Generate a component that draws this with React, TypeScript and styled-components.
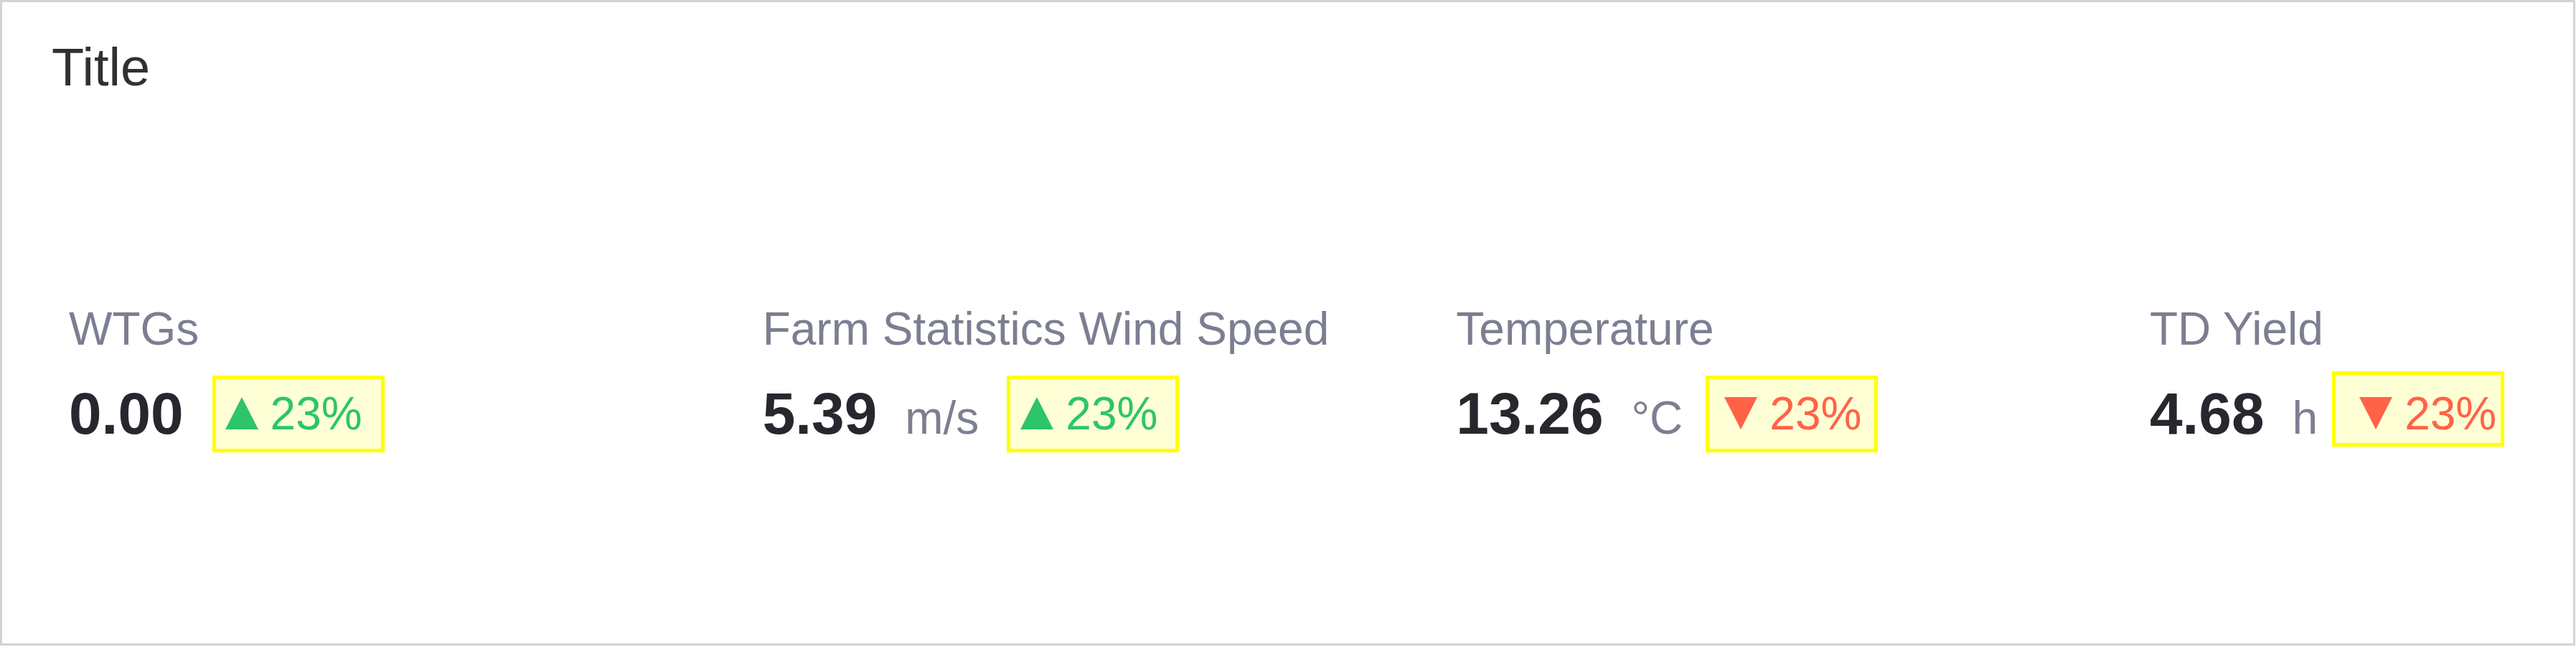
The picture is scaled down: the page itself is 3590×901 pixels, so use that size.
import * as React from "react";
import styled, { createGlobalStyle } from "styled-components";

const GlobalStyle = createGlobalStyle`
  html, body {
    margin: 0;
    padding: 0;
    background: #ffffff;
    overflow: hidden;
  }

  body {
    font-family: "Liberation Sans", Arial, sans-serif;
  }
`;

const Card = styled.section`
  box-sizing: border-box;
  width: 3589px;
  height: 899px;
  padding: 54px 24px 0 69px;
  border: 3px solid #d3d3d3;
  background: #ffffff;
  overflow: hidden;
`;

const Title = styled.h1`
  margin: 0;
  font-size: 74px;
  line-height: 74px;
  font-weight: 400;
  color: #303133;
`;

const StatGrid = styled.div`
  display: grid;
  grid-template-columns: repeat(3, 966.67px) 1fr;
  margin: 295px 0 0 24px;
`;

const Stat = styled.div`
  display: flex;
  flex-direction: column;
  min-width: 0;
`;

const Label = styled.div`
  font-size: 64px;
  line-height: 64px;
  color: #7c7f91;
  white-space: nowrap;
`;

const ValueRow = styled.div`
  display: flex;
  align-items: center;
  margin-top: 45px;
`;

const ValueGroup = styled.div`
  display: flex;
  align-items: baseline;
`;

const Value = styled.span`
  font-size: 82px;
  line-height: 82px;
  font-weight: 700;
  color: #26282e;
`;

const Unit = styled.span`
  margin-left: 39px;
  font-size: 64px;
  line-height: 64px;
  color: #7c7f91;
`;

const Badge = styled.span<{ $up: boolean; $dx: number; $dy: number; $h: number }>`
  position: relative;
  isolation: isolate;
  display: inline-flex;
  align-items: baseline;
  gap: 17px;
  margin-left: 58px;
  font-size: 64px;
  line-height: 64px;
  color: ${(p) => (p.$up ? "#2ec46a" : "#ff6347")};

  &::before {
    content: "";
    position: absolute;
    z-index: -1;
    left: ${(p) => p.$dx}px;
    top: ${(p) => p.$dy}px;
    box-sizing: border-box;
    width: 240px;
    height: ${(p) => p.$h}px;
    border: 5px solid #ffff00;
    background: #ffffd6;
  }
`;

const Arrow = ({ up }: { up: boolean }) => (
  <svg width="46" height="45" viewBox="0 0 46 45" fill="currentColor">
    {up ? <path d="M23 0 L46 45 L0 45 Z" /> : <path d="M0 0 H46 L23 45 Z" />}
  </svg>
);

interface StatItem {
  label: string;
  value: string;
  unit?: string;
  up: boolean;
  dx: number;
  dy: number;
  h: number;
}

const stats: StatItem[] = [
  { label: "WTGs", value: "0.00", up: true, dx: -18, dy: -21, h: 107 },
  { label: "Farm Statistics Wind Speed", value: "5.39", unit: "m/s", up: true, dx: -19, dy: -21, h: 107 },
  { label: "Temperature", value: "13.26", unit: "°C", up: false, dx: -26, dy: -21, h: 107 },
  { label: "TD Yield", value: "4.68", unit: "h", up: false, dx: -38, dy: -27, h: 105 },
];

const App = () => {
  return (
    <>
      <GlobalStyle />
      <Card>
        <Title>Title</Title>
        <StatGrid>
          {stats.map((s) => (
            <Stat key={s.label}>
              <Label>{s.label}</Label>
              <ValueRow>
                <ValueGroup>
                  <Value>{s.value}</Value>
                  {s.unit && <Unit>{s.unit}</Unit>}
                </ValueGroup>
                <Badge $up={s.up} $dx={s.dx} $dy={s.dy} $h={s.h}>
                  <Arrow up={s.up} />
                  <span>23%</span>
                </Badge>
              </ValueRow>
            </Stat>
          ))}
        </StatGrid>
      </Card>
    </>
  );
};

export default App;
